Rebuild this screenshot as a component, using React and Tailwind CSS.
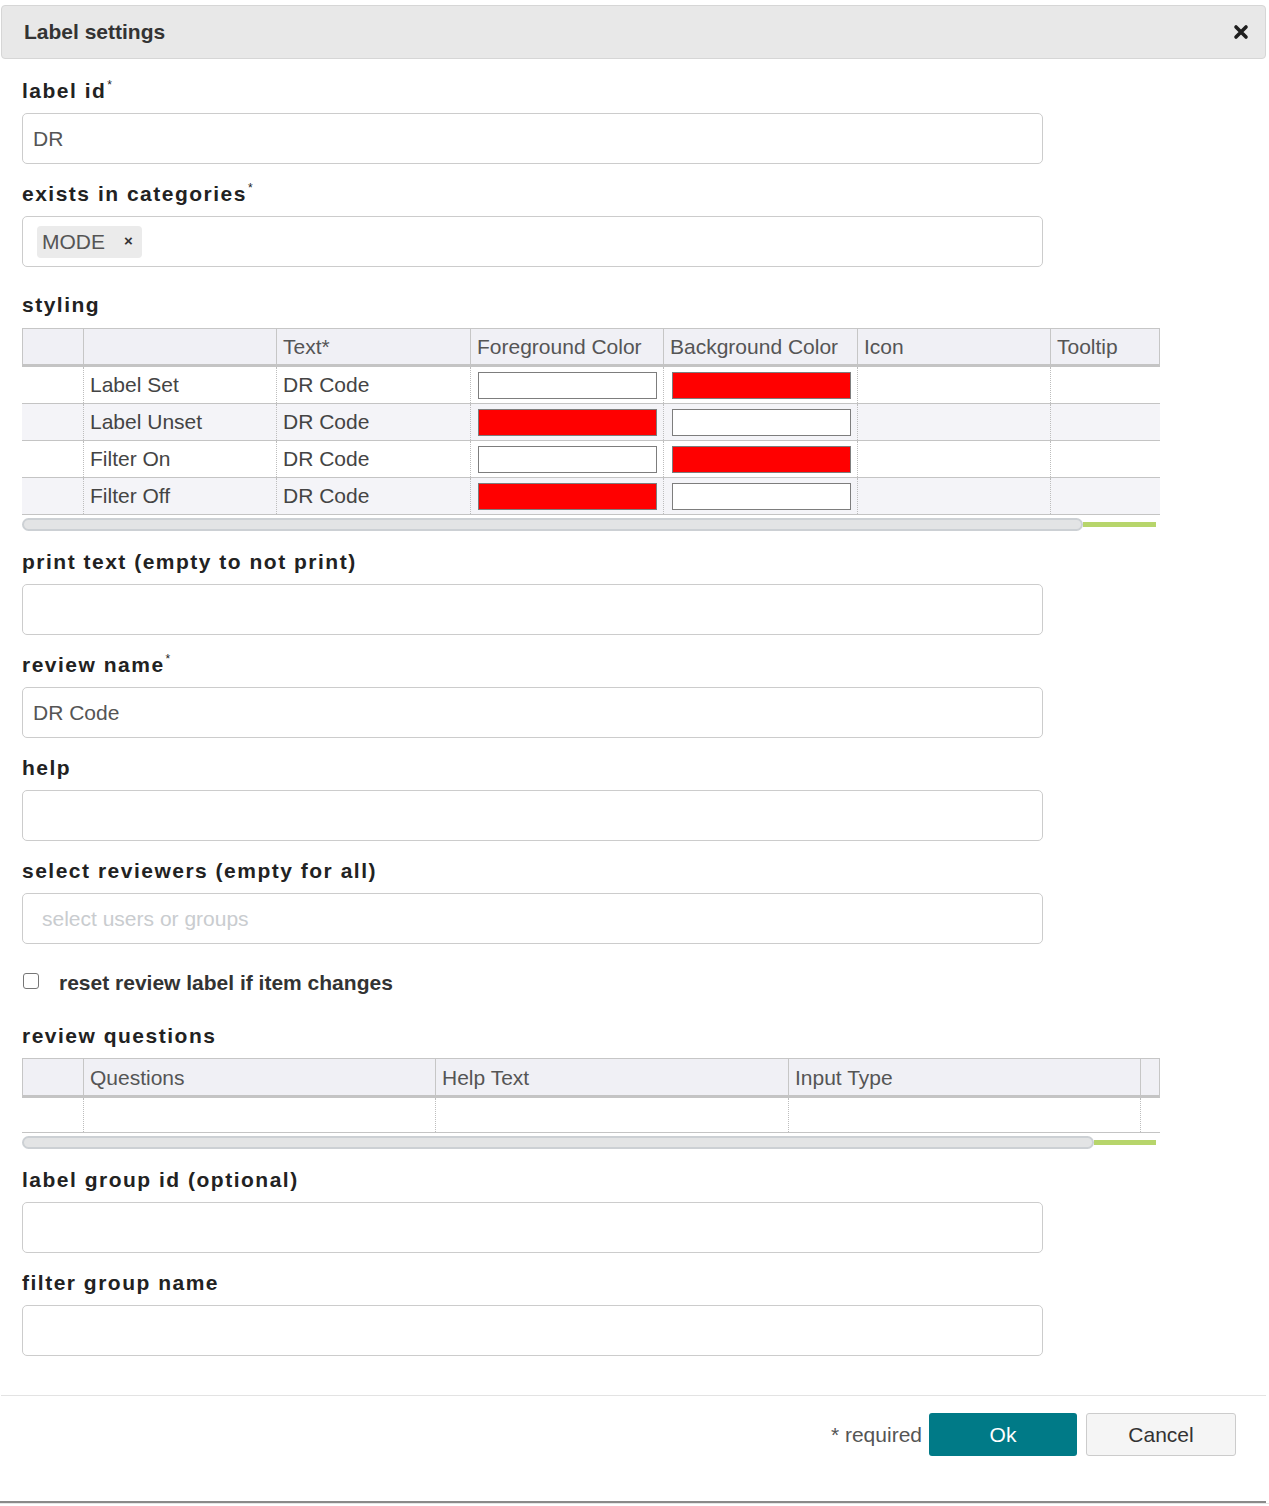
import React from 'react'

const font = { fontFamily: '"Liberation Sans", Arial, sans-serif' }

function Label({ children, required, className = '' }) {
  return (
    <div className={`h-[26px] leading-[26px] text-[21px] font-bold tracking-[1.5px] text-[#222] ${className}`}>
      {children}
      {required && <sup className="text-[12px] font-normal tracking-normal relative -top-[9px] ml-[1px]">*</sup>}
    </div>
  )
}

function TextInput({ value, placeholder, placeholderClass = 'pl-[11px]' }) {
  return (
    <div className={`w-[1021px] h-[51px] mt-[9px] border border-[#cccccc] rounded-[5px] bg-white flex items-center text-[21px] ${value ? 'pl-[10px] text-[#555]' : `${placeholderClass} text-[#c9cccf]`}`}>
      {value || placeholder}
    </div>
  )
}

function Swatch({ red }) {
  return (
    <div className={`h-[27px] w-[179px] border border-[#7d7d7d] ${red ? 'bg-[#ff0000]' : 'bg-white'}`} />
  )
}

function ScrollBar({ width }) {
  return (
    <div className="flex items-center mt-[3px] w-[1138px] h-[13px]">
      <div className="h-[13px] rounded-full bg-[#e3e4e5] border-2 border-[#ccd0d4]" style={{ width }} />
      <div className="flex-1 h-[5px] bg-[#b7d56b] mr-[4px]" />
    </div>
  )
}

const stylingRows = [
  { name: 'Label Set', fg: false, bg: true },
  { name: 'Label Unset', fg: true, bg: false },
  { name: 'Filter On', fg: false, bg: true },
  { name: 'Filter Off', fg: true, bg: false },
]

function StylingTable() {
  const headCols = ['w-[60px]', 'w-[193px]', 'w-[194px]', 'w-[193px]', 'w-[194px]', 'w-[193px]', 'flex-1']
  const cols = ['w-[61px]', 'w-[193px]', 'w-[194px]', 'w-[193px]', 'w-[194px]', 'w-[193px]', 'flex-1']
  const heads = ['', '', 'Text*', 'Foreground Color', 'Background Color', 'Icon', 'Tooltip']
  return (
    <div className="w-[1138px] mt-[10px]">
      <div className="flex h-[39px] bg-[#f0f0f5] border border-[#c6c6c6] border-b-[3px] border-b-[#c4c4c4] text-[21px] text-[#555]">
        {heads.map((h, i) => (
          <div key={i} className={`${headCols[i]} ${i > 0 ? 'border-l border-[#c6c6c6]' : ''} pl-[6px] leading-[36px]`}>{h}</div>
        ))}
      </div>
      {stylingRows.map((r, ri) => (
        <div key={r.name} className={`flex h-[37px] border-b border-[#c4c4c4] text-[21px] text-[#444] ${ri % 2 ? 'bg-[#f4f4f8]' : 'bg-white'}`}>
          <div className={cols[0]} />
          <div className={`${cols[1]} border-l border-dotted border-[#bdbdbd] pl-[6px] leading-[36px]`}>{r.name}</div>
          <div className={`${cols[2]} border-l border-dotted border-[#bdbdbd] pl-[6px] leading-[36px]`}>DR Code</div>
          <div className={`${cols[3]} border-l border-dotted border-[#bdbdbd] pl-[7px] flex items-center`}><Swatch red={r.fg} /></div>
          <div className={`${cols[4]} border-l border-dotted border-[#bdbdbd] pl-[8px] flex items-center`}><Swatch red={r.bg} /></div>
          <div className={`${cols[5]} border-l border-dotted border-[#bdbdbd]`} />
          <div className={`${cols[6]} border-l border-dotted border-[#bdbdbd]`} />
        </div>
      ))}
      <ScrollBar width="1061px" />
    </div>
  )
}

function QuestionsTable() {
  const headCols = ['w-[60px]', 'w-[352px]', 'w-[353px]', 'w-[352px]', 'flex-1']
  const cols = ['w-[61px]', 'w-[352px]', 'w-[353px]', 'w-[352px]', 'flex-1']
  const heads = ['', 'Questions', 'Help Text', 'Input Type', '']
  return (
    <div className="w-[1138px] mt-[9px]">
      <div className="flex h-[40px] bg-[#f0f0f5] border border-[#c6c6c6] border-b-[3px] border-b-[#c4c4c4] text-[21px] text-[#555]">
        {heads.map((h, i) => (
          <div key={i} className={`${headCols[i]} ${i > 0 ? 'border-l border-[#c6c6c6]' : ''} pl-[6px] leading-[37px]`}>{h}</div>
        ))}
      </div>
      <div className="flex h-[35px] border-b border-[#c4c4c4] bg-white">
        {cols.map((c, i) => (
          <div key={i} className={`${c} ${i > 0 ? 'border-l border-dotted border-[#bdbdbd]' : ''}`} />
        ))}
      </div>
      <ScrollBar width="1072px" />
    </div>
  )
}

export default function App() {
  return (
    <div className="bg-white min-h-[1506px]" style={font}>
      <div className="w-[1266px] h-[1503px] bg-white border-b-2 border-[#8a8a8a] flex flex-col">
        <div className="mt-[5px] ml-[1px] h-[54px] bg-[#e8e8e8] border border-[#d6d6d6] rounded-[4px] flex items-center justify-between pl-[22px] pr-[16px]">
          <span className="text-[21px] font-bold text-[#333]">Label settings</span>
          <svg width="16" height="16" viewBox="0 0 16 16">
            <path d="M3 3 L13 13 M13 3 L3 13" stroke="#1f1f1f" strokeWidth="3.6" strokeLinecap="round" />
          </svg>
        </div>

        <div className="pl-[22px] flex flex-col">
          <Label required className="mt-[19px]">label id</Label>
          <TextInput value="DR" />

          <Label required className="mt-[17px]">exists in categories</Label>
          <div className="w-[1021px] h-[51px] mt-[9px] border border-[#cccccc] rounded-[5px] bg-white flex items-center pl-[14px]">
            <div className="h-[32px] bg-[#ebebeb] rounded-[4px] flex items-center pl-[5px] pr-[9px] text-[21px] text-[#555]">
              MODE
              <span className="ml-[19px] text-[15px] font-bold text-[#333]">×</span>
            </div>
          </div>

          <Label className="mt-[25px]">styling</Label>
          <StylingTable />

          <Label className="mt-[18px]">print text (empty to not print)</Label>
          <TextInput />

          <Label required className="mt-[17px]">review name</Label>
          <TextInput value="DR Code" />

          <Label className="mt-[17px]">help</Label>
          <TextInput />

          <Label className="mt-[17px]">select reviewers (empty for all)</Label>
          <TextInput placeholder="select users or groups" placeholderClass="pl-[19px]" />

          <div className="mt-[26px] flex items-center h-[22px]">
            <div className="w-[16px] h-[16px] border border-[#767676] rounded-[3px] bg-white ml-[1px]" />
            <span className="ml-[20px] text-[21px] font-bold text-[#333] leading-[22px] mt-[4px]">reset review label if item changes</span>
          </div>

          <Label className="mt-[31px]">review questions</Label>
          <QuestionsTable />

          <Label className="mt-[18px]">label group id (optional)</Label>
          <TextInput />

          <Label className="mt-[17px]">filter group name</Label>
          <TextInput />
        </div>

        <div className="mt-[39px] ml-[1px] border-t border-[#e3e3e3] flex items-center justify-end pr-[30px] pt-[17px]">
          <span className="text-[21px] text-[#555] mr-[7px]">* required</span>
          <div className="w-[148px] h-[43px] bg-[#007a87] rounded-[3px] text-white text-[21px] flex items-center justify-center">Ok</div>
          <div className="w-[150px] h-[43px] ml-[9px] bg-[#f5f5f5] border border-[#cccccc] rounded-[3px] text-[#333] text-[21px] flex items-center justify-center">Cancel</div>
        </div>
      </div>
      <div className="h-[1px] bg-[#e6e6e6]" />
    </div>
  )
}
